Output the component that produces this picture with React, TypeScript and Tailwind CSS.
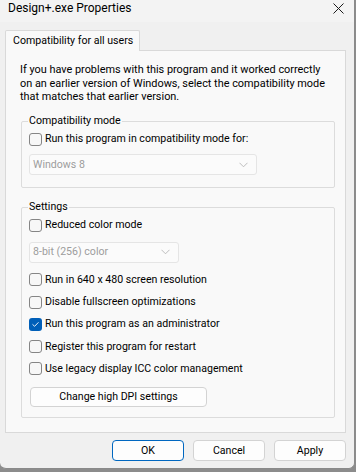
import React from "react";

function Check({ checked = false }: { checked?: boolean }) {
  return checked ? (
    <span className="flex h-[13px] w-[13px] shrink-0 items-center justify-center rounded-[3px] bg-[#005fb8]">
      <svg width="9" height="9" viewBox="0 0 9 9" fill="none">
        <path d="M1.8 4.6 L3.6 6.3 L7.2 2.6" stroke="#ffffff" strokeWidth="0.9" strokeLinecap="round" strokeLinejoin="round" />
      </svg>
    </span>
  ) : (
    <span className="block h-[13px] w-[13px] shrink-0 rounded-[3px] border border-[#858585] bg-[#f7f7f7]" />
  );
}

function CheckRow({ label, checked = false }: { label: string; checked?: boolean }) {
  return (
    <div className="flex h-[22.3px] items-center gap-[3px]">
      <Check checked={checked} />
      <span className="whitespace-nowrap">{label}</span>
    </div>
  );
}

function Select({ value, width }: { value: string; width: string }) {
  return (
    <div className={`flex h-[21px] items-center justify-between rounded-[3px] border border-[#e5e5e5] bg-[#fbfbfb] pl-[3px] pr-[8px] text-[#9d9d9d] ${width}`}>
      <span>{value}</span>
      <svg width="9" height="6" viewBox="0 0 9 6" fill="none">
        <path d="M0.5 0.8 L4.5 4.8 L8.5 0.8" stroke="#b5b5b5" strokeWidth="0.9" />
      </svg>
    </div>
  );
}

function Btn({ label, primary = false }: { label: string; primary?: boolean }) {
  return (
    <div
      className={`flex h-[21px] w-[72px] items-center justify-center rounded-[4px] bg-[#fdfdfd] ${
        primary ? "border border-[#0067c0]" : "border border-[#d3d3d3]"
      }`}
    >
      {label}
    </div>
  );
}

export default function App() {
  return (
    <div className="h-[472px] w-[356px] bg-[#8c8c8c] font-[family-name:Roboto,sans-serif] text-[10.6px] leading-[16px] text-[#000000]">
      <div className="flex h-[469px] w-[355px] flex-col rounded-b-[6px] border-r border-b border-[#8a8a8a] bg-[#f0f0f0]">
        {/* title bar */}
        <div className="flex h-[22px] items-start justify-between bg-[#f3f3f3] pl-[8px] pr-[10px]">
          <span className="whitespace-nowrap text-[12px] leading-[17px]">Design+.exe Properties</span>
          <svg width="11" height="11" viewBox="0 0 11 11" className="mt-[3px]">
            <path d="M0.5 0.5 L10.5 10.5 M10.5 0.5 L0.5 10.5" stroke="#1a1a1a" strokeWidth="1" />
          </svg>
        </div>
        {/* tab */}
        <div className="flex pl-[5px] pt-[8px]">
          <div className="relative z-10 -mb-[1px] flex h-[21px] w-[135px] items-center rounded-t-[2px] border border-b-0 border-[#d9d9d9] bg-[#f9f9f9] pl-[7px] whitespace-nowrap">
            Compatibility for all users
          </div>
        </div>
        {/* panel */}
        <div className="ml-[5px] mr-[8px] flex h-[383px] flex-col border border-[#d9d9d9] bg-[#f9f9f9] pl-[15px] pr-[10px] pt-[12px]">
          <p className="-ml-[1px] text-[10.9px] leading-[13.5px] whitespace-nowrap">
            If you have problems with this program and it worked correctly
            <br />
            on an earlier version of Windows, select the compatibility mode
            <br />
            that matches that earlier version.
          </p>
          <fieldset className="mt-[9.5px] rounded-[2px] border border-[#dcdcdc] px-[7px] pb-[12px]">
            <legend className="-ml-[1px] px-[1px] leading-[16px]">Compatibility mode</legend>
            <div className="-mt-[1px]">
              <CheckRow label="Run this program in compatibility mode for:" />
            </div>
            <div className="mt-[4px]">
              <Select value="Windows 8" width="w-[228px]" />
            </div>
          </fieldset>
          <fieldset className="mt-[11px] rounded-[2px] border border-[#dcdcdc] px-[7px] pb-[10px]">
            <legend className="-ml-[1px] px-[1px] leading-[16px]">Settings</legend>
            <div className="-mt-[1px]">
              <CheckRow label="Reduced color mode" />
            </div>
            <div className="mt-[5px] mb-[6px]">
              <Select value="8-bit (256) color" width="w-[150px]" />
            </div>
            <CheckRow label="Run in 640 x 480 screen resolution" />
            <CheckRow label="Disable fullscreen optimizations" />
            <CheckRow label="Run this program as an administrator" checked />
            <CheckRow label="Register this program for restart" />
            <CheckRow label="Use legacy display ICC color management" />
            <div className="mt-[6.5px] ml-[1px] flex h-[20px] w-[177px] items-center justify-center rounded-[4px] border border-[#d3d3d3] bg-[#fdfdfd]">
              Change high DPI settings
            </div>
          </fieldset>
        </div>
        {/* buttons */}
        <div className="mt-[7px] flex justify-end gap-[9px] pr-[8px]">
          <Btn label="OK" primary />
          <Btn label="Cancel" />
          <Btn label="Apply" />
        </div>
      </div>
    </div>
  );
}
